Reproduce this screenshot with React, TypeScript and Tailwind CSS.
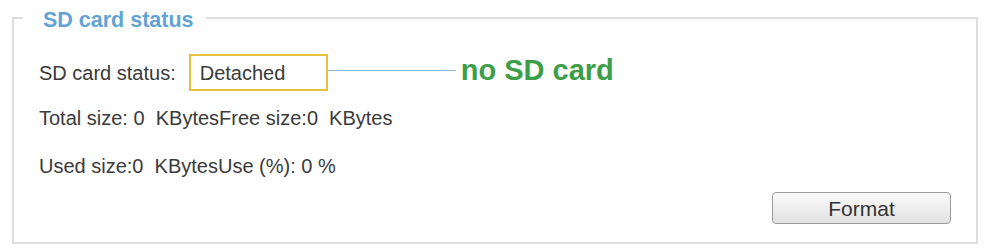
export default function App() {
  return (
    <div className="h-[248px] w-[985px] bg-white pl-[12px] pr-[7px] pt-[3px] font-['Liberation_Sans',Arial,sans-serif] text-[#3a3a3a]">
      <fieldset className="h-[241px] border-2 border-[#dedede]">
        <legend className="ml-[9px] pl-[20px] pr-[12px] pt-[5px] text-[21.5px] font-bold leading-[25px] text-[#62a3d6]">
          SD card status
        </legend>

        <div className="px-[25px]">
          <div className="mt-[21px] flex h-[37px] items-center text-[20px]">
            <span>SD card status:</span>
            <div className="ml-[13px] flex h-[37px] w-[139px] items-center border-2 border-[#e6c23c] pl-[9px]">
              Detached
            </div>
            <div className="mb-[4px] h-px w-[128px] bg-[#8bb8d6]" />
            <span className="mb-[4px] ml-[5px] text-[29px] font-bold text-[#3c9e47]">no SD card</span>
          </div>

          <div className="mt-[15px] h-[24px] text-[20px] leading-[24px]">
            Total size: 0&nbsp; KBytesFree size:0&nbsp; KBytes
          </div>

          <div className="mt-[24px] h-[24px] text-[20px] leading-[24px]">
            Used size:0&nbsp; KBytesUse (%): 0 %
          </div>

          <div className="mt-[14px] flex justify-end">
            <button className="h-[32px] w-[179px] rounded-[4px] border border-[#9a9a9a] bg-gradient-to-b from-[#fafafa] to-[#e2e2e2] text-[21px] text-[#333]">
              Format
            </button>
          </div>
        </div>
      </fieldset>
    </div>
  );
}
